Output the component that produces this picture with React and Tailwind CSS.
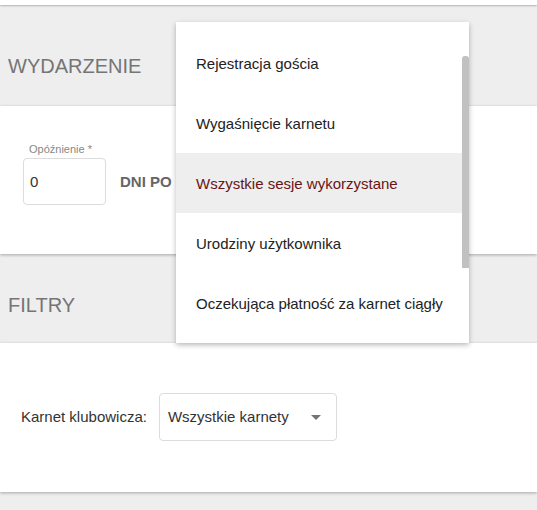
import { useState } from 'react'

const options = [
  'Rejestracja gościa',
  'Wygaśnięcie karnetu',
  'Wszystkie sesje wykorzystane',
  'Urodziny użytkownika',
  'Oczekująca płatność za karnet ciągły',
]

function EventMenu({ active }) {
  return (
    <div className="absolute left-[176px] top-[22px] w-[293px] h-[321px] bg-white shadow-[0_2px_5px_rgba(0,0,0,0.28)] overflow-hidden z-10">
      <ul className="pt-[11px]">
        {options.map((label, i) => (
          <li
            key={label}
            className={`h-[60px] flex items-center pl-5 pt-[2px] text-[15px] ${i === active ? 'bg-[#eeeeee] text-[#6a1414]' : 'text-[#222]'}`}
          >
            {label}
          </li>
        ))}
      </ul>
      {/* scrollbar thumb */}
      <div className="absolute right-0 top-[34px] w-[7px] h-[212px] rounded-t-[3px] bg-[#c1c1c1]" />
    </div>
  )
}

export default function App() {
  const [delay, setDelay] = useState('0')

  return (
    <div className="relative min-h-[510px] bg-[#eeeeee] font-['Liberation_Sans',Arial,sans-serif] overflow-hidden">
      <div className="h-[5px] bg-white shadow-[0_1px_2px_rgba(0,0,0,0.25)]" />

      <div className="pt-[49px] pb-[28px] pl-2 text-[20px] leading-6 text-[#757575]">WYDARZENIE</div>

      <section className="bg-white shadow-[0_1px_3px_rgba(0,0,0,0.3)] pl-[23px] pt-[37px] pb-[49px]">
        <div className="text-[11px] leading-[13px] text-[#888] pl-[6px] mb-[2px]">Opóźnienie *</div>
        <div className="flex items-center gap-[14px]">
          <input
            value={delay}
            onChange={(e) => setDelay(e.target.value)}
            className="w-[83px] h-[47px] border border-[#dcdcdc] rounded-[4px] px-[6px] text-[15px] text-[#333] outline-none"
          />
          <span className="font-bold text-[15px] text-[#666] pt-[2px]">DNI PO</span>
        </div>
      </section>

      <div className="pt-[39px] pb-[26px] pl-2 text-[20px] leading-6 text-[#757575]">FILTRY</div>

      <section className="bg-white shadow-[0_1px_3px_rgba(0,0,0,0.3)] pl-[21px] pt-[50px] pb-[51px] flex items-center gap-[12px]">
        <span className="text-[15px] text-[#333]">Karnet klubowicza:</span>
        <div className="w-[178px] h-[48px] border border-[#dcdcdc] rounded-[4px] flex items-center justify-between pl-[8px] pr-[15px]">
          <span className="text-[15px] text-[#333]">Wszystkie karnety</span>
          <span className="w-0 h-0 border-l-[5px] border-r-[5px] border-t-[5px] border-l-transparent border-r-transparent border-t-[#757575]" />
        </div>
      </section>

      <EventMenu active={2} />
    </div>
  )
}
